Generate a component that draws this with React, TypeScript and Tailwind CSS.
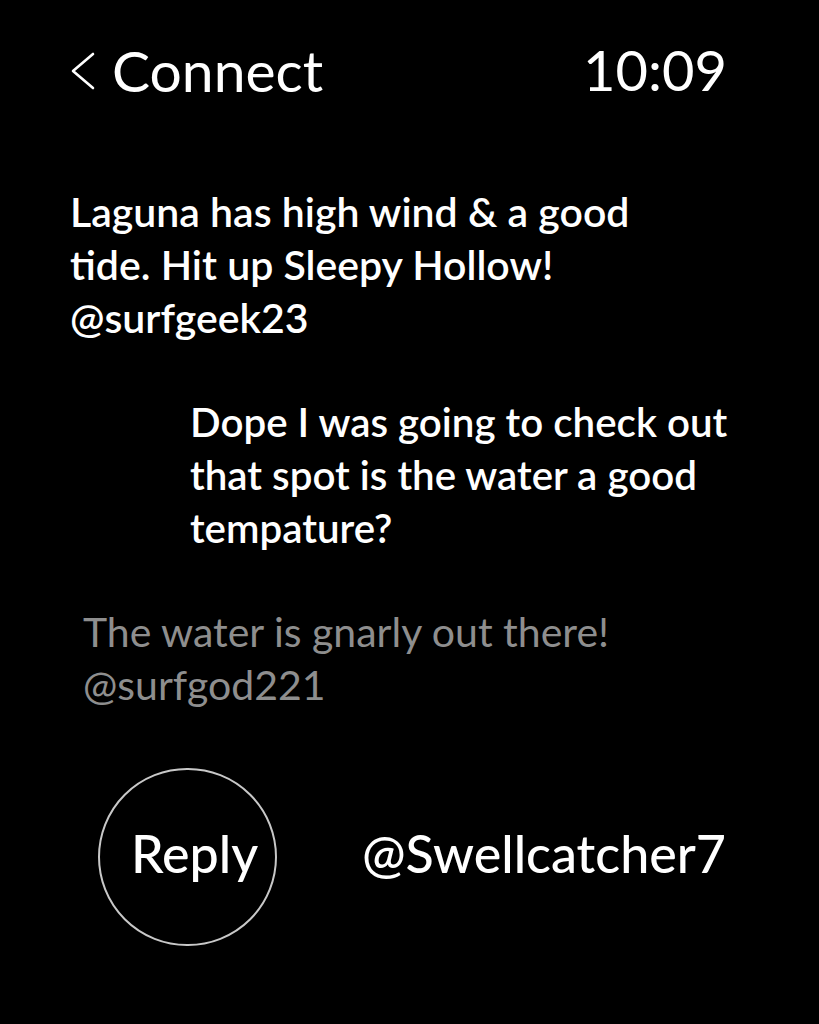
const font = { fontFamily: 'Lato, "Open Sans", sans-serif' };

function Header() {
  return (
    <header className="flex items-center justify-between pl-[70px] pr-[92px] pt-[37px]">
      <div className="flex items-center text-[57px] leading-[66px] text-white">
        <svg width="26" height="38" viewBox="0 0 26 38" fill="none" className="mr-[16px] mt-[2px]">
          <path d="M23 2 L3 19 L23 36" stroke="white" strokeWidth="2.6" strokeLinecap="round" strokeLinejoin="round" />
        </svg>
        <span>Connect</span>
      </div>
      <span className="text-[56px] leading-[66px] text-white">10:09</span>
    </header>
  );
}

function Message({ text, handle, className, muted }: { text: string; handle?: string; className: string; muted?: boolean }) {
  return (
    <div className={`${className} leading-[53px] ${muted ? 'font-normal text-[#8e8e8e]' : 'font-semibold text-white'}`}>
      <p>{text}</p>
      {handle && <p>{handle}</p>}
    </div>
  );
}

export default function App() {
  return (
    <div className="h-[1024px] w-[819px] overflow-hidden bg-black" style={font}>
      <Header />

      <main className="flex flex-col">
        <div className="mt-[82px]">
          <Message className="ml-[70px] w-[610px] text-[41px]" text="Laguna has high wind & a good tide. Hit up Sleepy Hollow!" handle="@surfgeek23" />
        </div>
        <div className="mt-[51px]">
          <Message className="ml-[190px] w-[590px] text-[40.3px]" text="Dope I was going to check out that spot is the water a good tempature?" />
        </div>
        <div className="mt-[51px]">
          <Message muted className="ml-[83px] w-[620px] text-[41px]" text="The water is gnarly out there!" handle="@surfgod221" />
        </div>
      </main>

      <footer className="mt-[57px] flex items-center pl-[98px]">
        <button className="flex h-[178px] w-[179px] items-center justify-center rounded-full border-2 border-[#c8c8c8] pb-[8px] pl-[14px] text-[52px] font-medium text-white">
          Reply
        </button>
        <span className="ml-[85px] pb-[8px] text-[52px] font-medium text-white">@Swellcatcher7</span>
      </footer>
    </div>
  );
}
